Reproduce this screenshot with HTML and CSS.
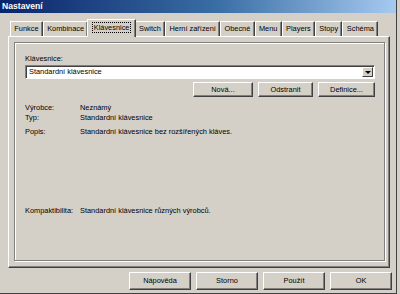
FILE: index.html
```html
<!DOCTYPE html>
<html>
<head>
<meta charset="utf-8">
<link rel="stylesheet" href="styles.css">
</head>
<body>
<div class="window">
  <div class="titlebar">Nastavení</div>
  <div class="client">
    <div class="tabstrip">
      <div class="tab">Funkce</div>
      <div class="tab">Kombinace</div>
      <div class="tab active"><span class="focus">Klávesnice</span></div>
      <div class="tab">Switch</div>
      <div class="tab">Herní zařízení</div>
      <div class="tab">Obecné</div>
      <div class="tab">Menu</div>
      <div class="tab">Players</div>
      <div class="tab">Stopy</div>
      <div class="tab">Schéma</div>
    </div>
    <div class="tabpanel">
      <div class="group">
        <div class="label-top">Klávesnice:</div>
        <div class="combo">
          <div class="combo-text">Standardní klávesnice</div>
          <div class="combo-btn"><span class="arrow"></span></div>
        </div>
        <div class="btnrow">
          <div class="btn small b-nova">Nová...</div>
          <div class="btn small b-odstr">Odstranit</div>
          <div class="btn small b-def">Definice...</div>
        </div>
        <div class="info">
          <div class="row"><span class="k">Výrobce:</span><span class="v">Neznámý</span></div>
          <div class="row"><span class="k">Typ:</span><span class="v">Standardní klávesnice</span></div>
          <div class="row popis"><span class="k">Popis:</span><span class="v">Standardní klávesnice bez rozšířených kláves.</span></div>
          <div class="row kompat"><span class="k">Kompaktibilita:</span><span class="v">Standardní klávesnice různých výrobců.</span></div>
        </div>
      </div>
    </div>
    <div class="footer">
      <div class="btn big">Nápověda</div>
      <div class="btn big">Storno</div>
      <div class="btn big">Použít</div>
      <div class="btn big">OK</div>
    </div>
  </div>
</div>
</body>
</html>
```
FILE: styles.css
```css
* { box-sizing: border-box; }
html, body {
  margin: 0;
  padding: 0;
  width: 400px;
  height: 294px;
  background: #d4d0c8;
  overflow: hidden;
  font-family: "Liberation Sans", Arial, sans-serif;
  font-size: 7.4px;
  color: #000;
}
.window {
  width: 397px;
  height: 294px;
  border-right: 1px solid #404040;
  border-bottom: 1px solid #404040;
  display: flex;
  flex-direction: column;
}
.titlebar {
  height: 13px;
  background: linear-gradient(to right, #0a246a, #3a6ea5 55%, #a6caf0);
  color: #fff;
  font-weight: bold;
  font-size: 8.6px;
  line-height: 13px;
  padding-left: 2px;
}
.client {
  flex: 1;
  display: flex;
  flex-direction: column;
  padding: 6px 4px 0 8px;
}
.tabstrip {
  display: flex;
  height: 17px;
  padding-left: 2px;
  align-items: flex-end;
}
.tab {
  height: 15px;
  line-height: 14px;
  padding: 0 3.3px;
  border-left: 1px solid #fff;
  border-top: 1px solid #fff;
  border-right: 1px solid #404040;
  box-shadow: inset -1px 0 0 #808080;
  white-space: nowrap;
}
.tab.active {
  line-height: 16px;
  margin: 0 -1px -1px -1px;
  padding: 0 4.3px;
  background: #d4d0c8;
  position: relative;
  z-index: 1;
  height: 18px;
}
.focus {
  outline: 1px dotted #000;
  padding: 0 1px;
}
.tabpanel {
  height: 232px;
  margin-right: 2px;
  border-top: 1px solid #fff;
  border-left: 1px solid #fff;
  border-right: 1px solid #404040;
  border-bottom: 1px solid #404040;
  box-shadow: inset -1px -1px 0 #808080;
  padding: 5px 4px 6px 5px;
}
.group {
  height: 100%;
  border: 1px solid #808080;
  box-shadow: inset 1px 1px 0 #fff, 1px 1px 0 #fff;
  padding: 11px 9px 0 10px;
}
.label-top {
  height: 10px;
  line-height: 10px;
}
.combo {
  margin-top: 1px;
  height: 14px;
  background: #fff;
  border-top: 1px solid #808080;
  border-left: 1px solid #808080;
  border-right: 1px solid #fff;
  border-bottom: 1px solid #fff;
  box-shadow: inset 1px 1px 0 #404040;
  display: flex;
  align-items: stretch;
}
.combo-text {
  flex: 1;
  padding-left: 3px;
  line-height: 12px;
}
.combo-btn {
  width: 11px;
  margin: 1px;
  background: #d4d0c8;
  border-top: 1px solid #fff;
  border-left: 1px solid #fff;
  border-right: 1px solid #404040;
  border-bottom: 1px solid #404040;
  display: flex;
  align-items: center;
  justify-content: center;
}
.arrow {
  width: 0;
  height: 0;
  border-left: 3px solid transparent;
  border-right: 3px solid transparent;
  border-top: 3px solid #000;
}
.btnrow {
  display: flex;
  justify-content: flex-end;
  gap: 5px;
  margin-top: 3px;
}
.btn {
  background: #d4d0c8;
  border-top: 1px solid #fff;
  border-left: 1px solid #fff;
  border-right: 1px solid #404040;
  border-bottom: 1px solid #404040;
  box-shadow: inset -1px -1px 0 #808080;
  text-align: center;
}
.btn.small {
  height: 15px;
  line-height: 13px;
}
.b-nova { width: 60px; }
.b-odstr { width: 55px; }
.b-def { width: 57px; }
.info {
  margin-top: 6px;
}
.row {
  display: flex;
  height: 10px;
  line-height: 10px;
}
.row .k { width: 55px; }
.row.popis { margin-top: 4px; }
.row.kompat { margin-top: 69px; }
.footer {
  display: flex;
  justify-content: flex-end;
  gap: 5px;
  margin-top: 4px;
}
.btn.big {
  width: 62px;
  height: 18px;
  line-height: 16px;
}
```
